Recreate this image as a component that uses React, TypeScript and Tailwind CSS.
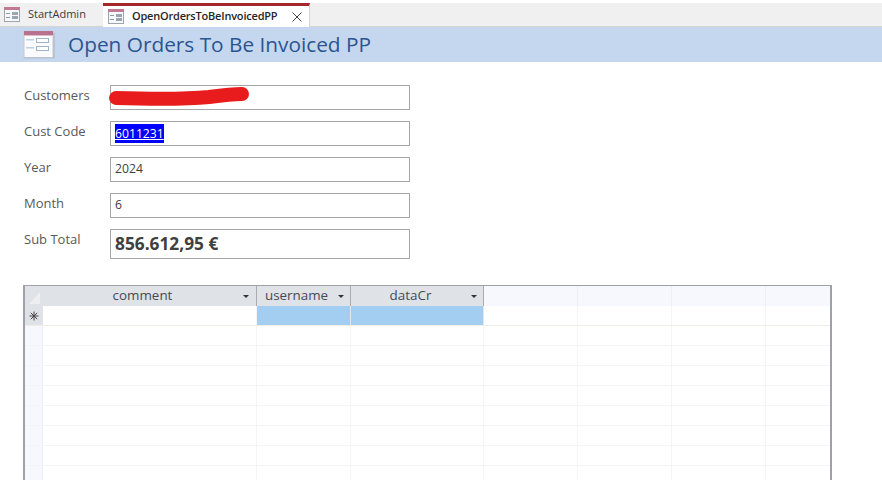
const FONT = "font-['Open_Sans','Noto_Sans',sans-serif]";

function FormIcon({ large }: { large?: boolean }) {
  if (large) {
    return (
      <svg width="32" height="28" viewBox="0 0 32 28" className="shrink-0 -ml-[1px]">
        <rect x="1" y="0.5" width="29" height="26" fill="#fbfbfd" stroke="#c9c9cf" />
        <rect x="30" y="2" width="2" height="25" fill="#b9c2cf" />
        <rect x="1" y="26" width="31" height="1.5" fill="#b9c2cf" />
        <rect x="1" y="0" width="29" height="4" fill="#b9708c" />
        <rect x="1" y="4" width="29" height="1" fill="#e2b9c8" />
        <rect x="3" y="8" width="8" height="1.5" fill="#bcd0e8" />
        <rect x="3" y="16" width="8" height="1.5" fill="#bcd0e8" />
        <rect x="13.5" y="7.5" width="12" height="4" fill="#fff" stroke="#9fb4cc" />
        <rect x="13.5" y="15.5" width="12" height="4" fill="#fff" stroke="#9fb4cc" />
      </svg>
    );
  }
  return (
    <svg width="16" height="15" viewBox="0 0 16 15" className="shrink-0">
      <rect x="0.5" y="0.5" width="15" height="14" fill="#f7f8fa" stroke="#a0a4ac" />
      <rect x="0" y="0" width="16" height="3" fill="#c07a94" />
      <rect x="2" y="6" width="4" height="1" fill="#8a98ab" />
      <rect x="2" y="10" width="4" height="1" fill="#8a98ab" />
      <rect x="8" y="5" width="6" height="3" fill="#9aa4b3" />
      <rect x="8" y="9" width="6" height="3" fill="#9aa4b3" />
    </svg>
  );
}

function Field({ label, mt, tall, children }: { label: string; mt: string; tall?: boolean; children: React.ReactNode }) {
  return (
    <div className={`flex items-start ${mt}`}>
      <div className="w-[86px] text-[13px] leading-[20px] text-[#595959]">{label}</div>
      <div className={`w-[300px] ${tall ? "h-[30px]" : "h-[25px]"} border border-[#a6a6a6] px-[4px] pb-[1px] flex items-center text-[#404040]`}>
        {children}
      </div>
    </div>
  );
}

function Arrow({ right }: { right: string }) {
  return <span className={`absolute ${right} top-[9px] w-0 h-0 border-x-[3px] border-x-transparent border-t-[3px] border-t-[#333]`} />;
}

const COLS = ["w-[214px]", "w-[94px]", "w-[133px]", "w-[94px]", "w-[94px]", "w-[94px]", "flex-1"];

function Star() {
  return (
    <svg width="18" height="20" viewBox="0 0 18 20">
      <path d="M9 5.5 V14.5 M4.5 10 H13.5 M5.8 6.8 L12.2 13.2 M12.2 6.8 L5.8 13.2" stroke="#444" strokeWidth="1" fill="none" />
    </svg>
  );
}

export default function App() {
  const heads = [
    { t: "comment", pad: "pr-[14px]", right: "right-[7px]" },
    { t: "username", pad: "pr-[14px]", right: "right-[6px]" },
    { t: "dataCr", pad: "pr-[13px]", right: "right-[6px]" },
  ];
  return (
    <div className={`h-[480px] w-[882px] overflow-hidden bg-white ${FONT}`}>
      <div className="h-[3px] bg-white" />
      <div className="h-[24px] flex bg-[#f0f0f0] border-b border-[#d4d4d4]">
        <div className="w-[103px] flex items-center pl-[4px] gap-[8px] text-[11px] text-[#3b3b3b]">
          <FormIcon />
          <span>StartAdmin</span>
        </div>
        <div className="w-[207px] h-[24px] bg-white border-t-[3px] border-t-[#a4262c] border-r border-r-[#d4d4d4] flex items-center pl-[5px] text-[11px] text-[#262626]">
          <FormIcon />
          <span className="ml-[8px] font-semibold tracking-[-0.2px]">OpenOrdersToBeInvoicedPP</span>
          <svg width="10" height="10" viewBox="0 0 10 10" className="ml-[15px]">
            <path d="M0.5 0.5 L9.5 9.5 M9.5 0.5 L0.5 9.5" stroke="#444" strokeWidth="1" fill="none" />
          </svg>
        </div>
      </div>
      <div className="h-[35px] bg-[#c5d7ef] flex items-center pl-[24px] gap-[13px]">
        <FormIcon large />
        <span className="text-[20.8px] text-[#2a5590]">Open Orders To Be Invoiced PP</span>
      </div>
      <div className="pl-[24px] pt-[23px]">
        <Field label="Customers" mt="">
          <svg width="142" height="20" viewBox="0 0 142 20" className="-ml-[6px] shrink-0 overflow-visible">
            <path d="M7 11 C40 12 80 12 100 10 C115 8 125 7 133 7" stroke="#e81c1c" strokeWidth="14" strokeLinecap="round" fill="none" />
          </svg>
        </Field>
        <Field label="Cust Code" mt="mt-[11px]">
          <span className="bg-[#0000ff] text-white text-[12.2px] leading-[19px] underline">6011231</span>
        </Field>
        <Field label="Year" mt="mt-[11px]">
          <span className="text-[12.2px]">2024</span>
        </Field>
        <Field label="Month" mt="mt-[11px]">
          <span className="text-[12.2px]">6</span>
        </Field>
        <Field label="Sub Total" mt="mt-[11px]" tall>
          <span className="text-[17.3px] font-bold">856.612,95 €</span>
        </Field>
      </div>
      <div className="ml-[23px] mt-[26px] w-[809px] h-[300px] border-t border-x-2 border-[#a0a0a8] border-b-0 overflow-hidden">
        <div className="flex h-[20px] bg-[#f7f8fe]">
          <div className="w-[18px] bg-[#dfe2e6] relative overflow-hidden">
            <svg width="18" height="20" className="absolute inset-0">
              <path d="M4 18 L15 6 L15 18 Z" fill="#eceef0" />
            </svg>
          </div>
          {COLS.map((c, i) => (
            <div
              key={i}
              className={`${c} relative text-[13.4px] leading-[19px] text-center text-[#444b57] ${i < 3 ? "bg-[#dfe2e6] border-r border-r-[#a8acb2]" : "border-r border-r-[#eceef4] last:border-r-0"}`}
            >
              {heads[i] ? (
                <>
                  <span className={heads[i].pad}>{heads[i].t}</span>
                  <Arrow right={heads[i].right} />
                </>
              ) : null}
            </div>
          ))}
        </div>
        <div className="flex h-[20px] border-b border-[#eeeee6]">
          <div className="w-[18px] bg-[#dfe2e6]">
            <Star />
          </div>
          {COLS.map((c, i) => (
            <div key={i} className={`${c} ${i === 1 || i === 2 ? "bg-[#a3cef1] border-r border-r-[#dfe8ee]" : "border-r border-r-[#f5f5f5] last:border-r-0"}`} />
          ))}
        </div>
        {[0, 1, 2, 3, 4, 5, 6, 7].map((r) => (
          <div key={r} className="flex h-[20px] border-b border-[#f5f5f5]">
            <div className="w-[18px] bg-[#f7f8fe] border-r border-r-[#eceef4]" />
            {COLS.map((c, i) => (
              <div key={i} className={`${c} border-r border-r-[#f5f5f5] last:border-r-0`} />
            ))}
          </div>
        ))}
      </div>
    </div>
  );
}
